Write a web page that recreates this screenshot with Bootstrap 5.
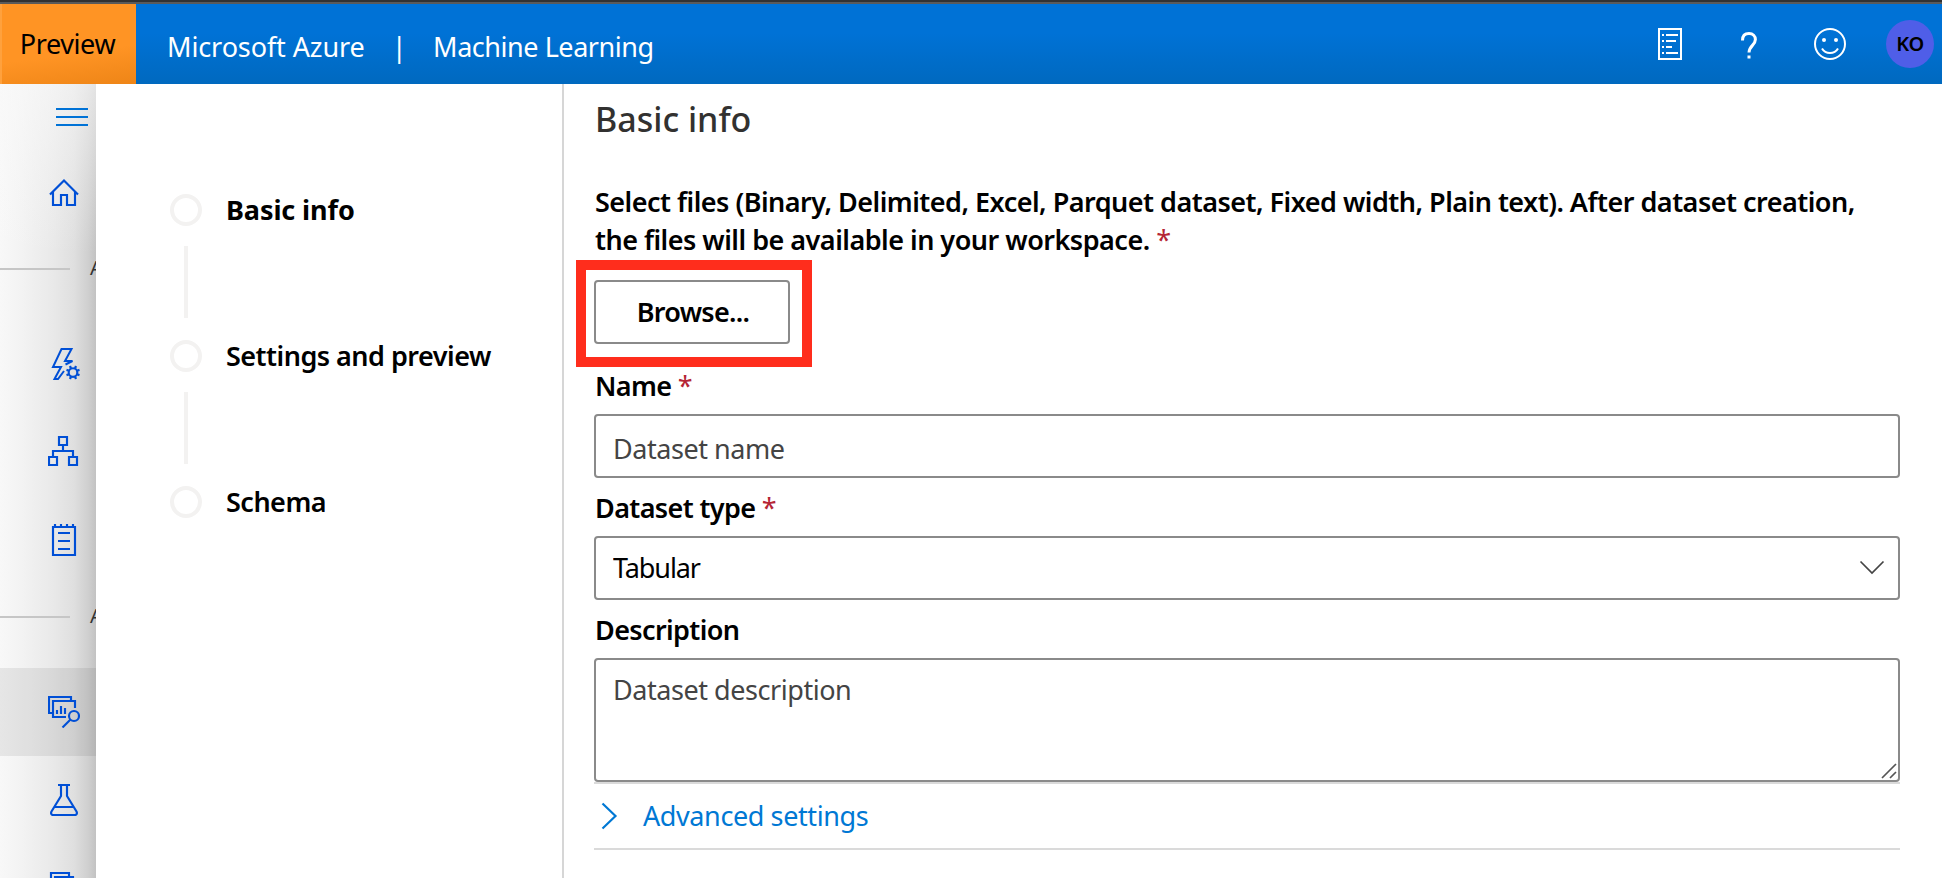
<!DOCTYPE html>
<html lang="en">
<head>
<meta charset="utf-8">
<title>Microsoft Azure | Machine Learning</title>
<link rel="stylesheet" href="https://cdn.jsdelivr.net/npm/bootstrap@5.3.0/dist/css/bootstrap.min.css">
<style>
  html, body { height: 100%; overflow: hidden; }
  body { font-family: "Noto Sans", "Open Sans", sans-serif; font-size: 27px; line-height: 38px; letter-spacing: -.4px; color: #000; background: #fff; }
  svg { display: block; flex: none; fill: none; stroke: currentColor; stroke-width: 2; }
  .semi { font-weight: 600; letter-spacing: -.51px; }
  .topbar { height: 84px; padding: 0; border-top: 2px solid #323232; background: linear-gradient(#0072d6 0, #0072d6 38%, #0069bf 100%); flex: none; color: #fff; }
  .topbar::before { content: ""; position: absolute; inset: 0 0 auto 0; height: 2px; background: #5a5a5a; }
  .preview-tag { width: 136px; height: 80px; margin-top: 2px; padding-right: 3px; color: #000; background: linear-gradient(172deg, #ff9424 60%, #ee8517 100%); border-left: 2px solid #ffa13d; }
  .brand-text { margin-left: 31px; padding-top: 7px; gap: 27px; letter-spacing: -.45px; }
  .topbar-icons { margin-top: 2px; padding-right: 8px; }
  .avatar { width: 48px; height: 48px; background: #4f5ee8; color: #000; font-size: 20px; font-weight: 600; letter-spacing: -.5px; }
  .side { width: 96px; flex: none; color: #004fd6; overflow: hidden; background: linear-gradient(to right, #f8f8f8 0, #f3f3f3 22%, #e9e9e9 55%, #dfdfdf 77%, #cfcfcf 92%, #c2c2c2 100%); position: relative; }
  .side::before { content: ""; position: absolute; inset: 0 0 auto 0; height: 170px; background: linear-gradient(to bottom, rgba(250,250,250,.6), rgba(250,250,250,0)); }
  .side a { display: flex; height: 88px; padding-left: 48px; align-items: center; color: inherit; flex: none; position: relative; }
  .side a.menu-toggle { height: 64px; padding: 2px 0 0 56px; color: #0072d6; }
  .side a.active { background: rgba(0,0,0,.07); }
  .side svg { stroke-width: 2.15; }
  .side-label { height: 84px; margin: -9px 0 9px; font-size: 20px; color: #333; flex: none; white-space: nowrap; }
  .side-label i { width: 70px; height: 2px; background: #c6c6c6; margin-right: 20px; flex: none; }
  .side-label span { margin-top: -3px; }
  .steps { width: 468px; flex: none; padding: 110px 0 0 74px; border-right: 2px solid #d6d6d6; }
  .step-row { height: 32px; gap: 24px; }
  .step-dot { width: 32px; height: 32px; border: 4px solid #f3f2f1; border-radius: 50%; }
  .step-line { width: 4px; height: 72px; margin: 20px 0 22px 14px; background: #f3f2f1; }
  .step-current { font-weight: 700; letter-spacing: -.1px; }
  .form-pane { padding: 12px 42px 0 30px; min-width: 0; }
  .form-pane h1 { font-size: 34px; line-height: 46px; font-weight: 500; color: #323130; margin: 0 0 41px; letter-spacing: 0; padding-left: 1px; }
  .lead-label { padding-left: 1px; white-space: nowrap; }
  .req { color: #b52535; font-weight: 400; }
  .callout { width: 236px; height: 107px; margin: 1px 0 0 -18px; border: 10px solid #ff2d1c; padding: 10px 8px; }
  .btn-browse { width: 196px; height: 64px; padding: 0 0 0 2px; font-size: 27px; border: 2px solid #8a8a8a; border-radius: 4px; color: #000; background: #fff; letter-spacing: -.7px; }
  .form-label { display: block; margin: 0 0 9px; padding-left: 1px; letter-spacing: -.62px; }
  .form-control, .form-select { height: 64px; font-size: 27px; line-height: 38px; letter-spacing: -.45px; border: 2px solid #8a8a8a; border-radius: 4px; padding: 4px 16px 0 17px; color: #000; margin-bottom: 11px; }
  .form-control::placeholder { color: #444; opacity: 1; }
  .form-select { padding: 0 17px; background-image: none; letter-spacing: -1.1px; }
  textarea.form-control { height: 124px; padding-top: 11px; resize: none; margin: 0; }
  .over-chevron { position: absolute; right: 15px; top: 24px; color: #444; }
  .over-grip { position: absolute; right: 3px; bottom: 3px; color: #555; }
  .advanced { height: 68px; border-top: 2px solid #dadada; border-bottom: 2px solid #dadada; color: #0078d4; padding: 0 0 1px 7px; gap: 25px; text-decoration: none; }
</style>
</head>
<body class="d-flex flex-column">

<nav class="topbar navbar position-relative flex-nowrap align-items-stretch justify-content-start">
  <div class="preview-tag d-flex align-items-center justify-content-center">Preview</div>
  <div class="brand-text d-flex align-items-center">
    <span style="letter-spacing:-.1px">Microsoft Azure</span><span>|</span><span>Machine Learning</span>
  </div>
  <div class="topbar-icons d-flex align-items-center ms-auto">
    <svg width="24" height="32" viewBox="0 0 24 32"><path d="M1 1h22v30H1zM4 7h2M8 7h12M4 13h2M8 13h10M4 19h2M8 19h6M4 25h2M8 25h12"/></svg>
    <svg width="16" height="28" viewBox="0 0 16 28" style="margin:4px 57px 0 59px"><path stroke-width="3" d="M1.500 8.500C1.500 4 4 1.600 8 1.600s6.400 2.400 6.400 6c0 5.600-6.400 6.100-6.400 13"/><path stroke="none" fill="currentColor" d="M6.500 23.500h3v3h-3z"/></svg>
    <svg width="32" height="32" viewBox="0 0 32 32"><circle cx="16" cy="16" r="15"/><path d="M8 20.500c3.500 6 12.500 6 16 0"/><g fill="currentColor" stroke="none"><circle cx="10" cy="12" r="2"/><circle cx="22" cy="12" r="2"/></g></svg>
    <span class="avatar rounded-circle d-flex align-items-center justify-content-center" style="margin-left:40px">KO</span>
  </div>
</nav>

<div class="d-flex flex-grow-1 overflow-hidden">
  <aside class="side d-flex flex-column">
    <a class="menu-toggle"><svg width="32" height="18" viewBox="0 0 32 18"><path stroke-width="2" d="M0 1h32M0 9h32M0 17h32"/></svg></a>
    <a><svg width="32" height="32" viewBox="0 0 32 32"><path d="M2 18.500 16 4.500l14 14M5 16v13h8V19h6v10h8V16"/></svg></a>
    <div class="side-label d-flex align-items-center"><i></i><span>A</span></div>
    <a><svg width="32" height="32" viewBox="0 0 32 32"><path stroke-width="2" d="M17.500 16.500 24.500 13H17L23.500 1h-10L5 19h8L6.500 31H10l6-8"/><circle cx="25" cy="24.500" r="4.300"/><path stroke-width="2.200" d="M23 20.500l-1-2.500M27 20.500l1-2.500M23 28.500l-1 2.500M27 28.500l1 2.500M21 22.700l-2.500-.8M21 26.300l-2.500.8M29 22.700l2.500-.8M29 26.300l2.500.8"/></svg></a>
    <a><svg width="32" height="32" viewBox="0 0 32 32"><path d="M11 1h8v8h-8zM1 21h8v8H1zM21 21h8v8h-8zM15 10v5M5 20v-5h20v5"/></svg></a>
    <a><svg width="32" height="32" viewBox="0 0 32 32"><path d="M5 3h22v28H5zM7 0v3M13 0v3M19 0v3M25 0v3M10 9h12M10 17h12M10 25h12"/></svg></a>
    <div class="side-label d-flex align-items-center"><i></i><span>A</span></div>
    <a class="active"><svg width="32" height="32" viewBox="0 0 32 32"><path d="M5 17H1V1h22v3M18 21H5V5h22v7M9 18v-4M13 18v-8M17 18v-6"/><circle cx="26" cy="20" r="5"/><path d="m22.500 23.500-8 8"/></svg></a>
    <a><svg width="32" height="32" viewBox="0 0 32 32"><path d="M10 1h12M13 1v11L3.500 27.500C2.500 29.500 3.500 31 5 31h22c1.500 0 2.500-1.500 1.500-3.500L19 12V1M7 23h18"/></svg></a>
    <a><svg width="32" height="32" viewBox="0 0 32 32"><path d="M3 20V1h18v3M7 24V5h18v19z"/></svg></a>
  </aside>

  <section class="steps">
    <div class="step-row d-flex align-items-center"><span class="step-dot"></span><span class="step-current">Basic info</span></div>
    <div class="step-line"></div>
    <div class="step-row semi d-flex align-items-center"><span class="step-dot"></span><span>Settings and preview</span></div>
    <div class="step-line"></div>
    <div class="step-row semi d-flex align-items-center"><span class="step-dot"></span><span>Schema</span></div>
  </section>

  <main class="form-pane flex-grow-1">
    <h1>Basic info</h1>
    <div class="lead-label semi">Select files (Binary, Delimited, Excel, Parquet dataset, Fixed width, Plain text). After dataset creation,<br>the files will be available in your workspace. <span class="req">*</span></div>
    <div class="callout"><button class="btn btn-browse semi" type="button">Browse...</button></div>
    <label class="form-label semi" for="ds-name">Name <span class="req">*</span></label>
    <input class="form-control" id="ds-name" placeholder="Dataset name">
    <label class="form-label semi" for="ds-type">Dataset type <span class="req">*</span></label>
    <div class="position-relative">
      <select class="form-select" id="ds-type"><option>Tabular</option></select>
      <svg class="over-chevron" width="26" height="15" viewBox="0 0 26 15"><path stroke-width="1.700" d="m1.500 1.500 11.500 11.500L24.500 1.500"/></svg>
    </div>
    <label class="form-label semi" for="ds-desc">Description</label>
    <div class="position-relative">
      <textarea class="form-control" id="ds-desc" placeholder="Dataset description"></textarea>
      <svg class="over-grip" width="16" height="16" viewBox="0 0 16 16"><path stroke-width="1.700" d="M1 15 15 1M9 15l6-6"/></svg>
    </div>
    <a class="advanced d-flex align-items-center"><svg width="17" height="28" viewBox="0 0 17 28"><path stroke-width="2.200" d="m1.500 1.500 13 12.500-13 12.500"/></svg>Advanced settings</a>
  </main>
</div>

<script src="https://cdn.jsdelivr.net/npm/bootstrap@5.3.0/dist/js/bootstrap.bundle.min.js"></script>
</body>
</html>
